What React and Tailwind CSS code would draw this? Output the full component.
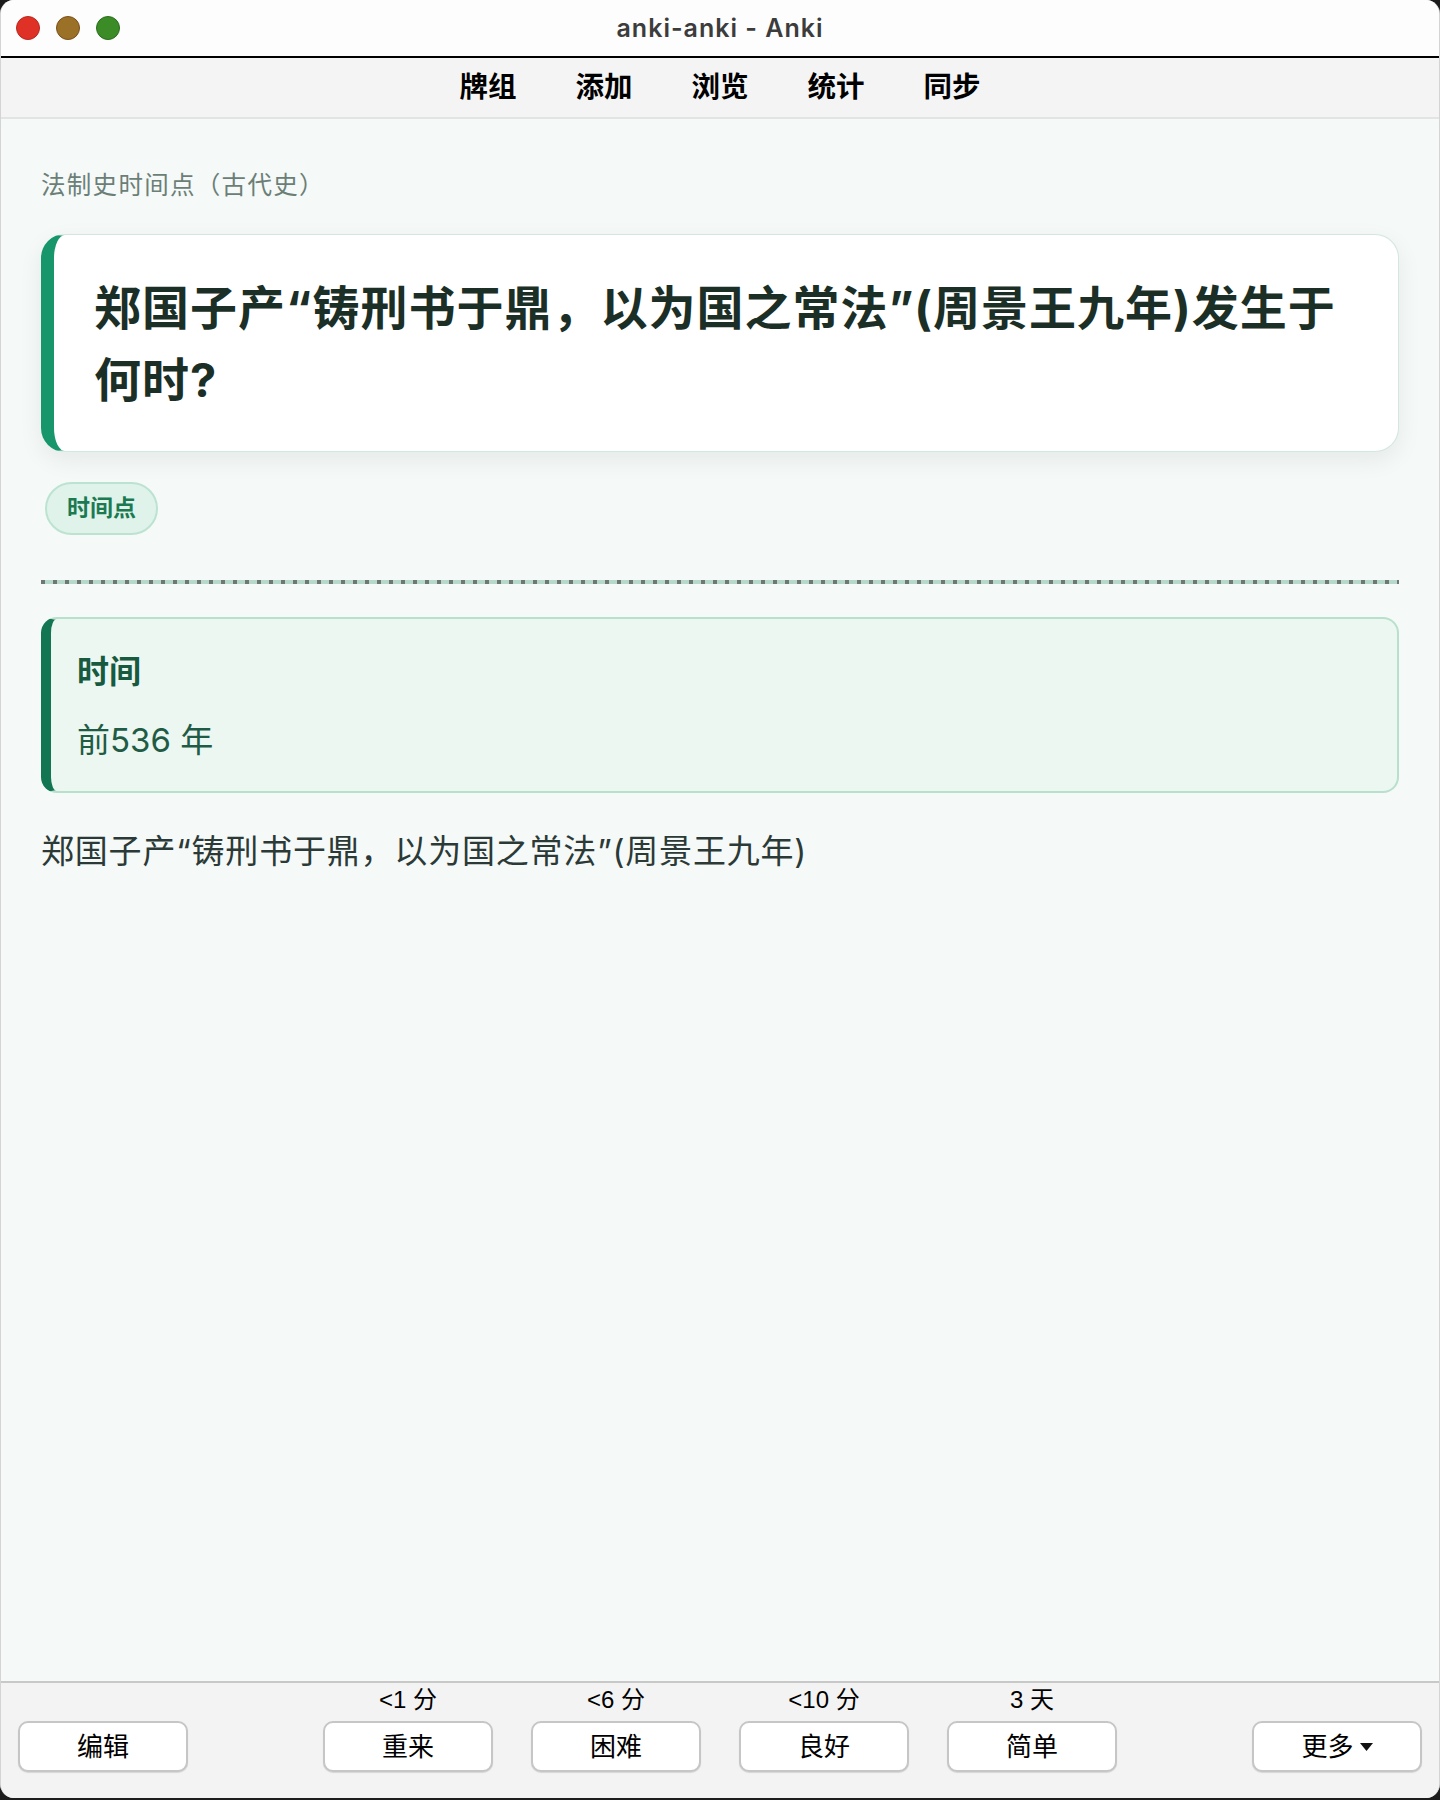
import React from "react";

const cjk = { fontFamily: 'Inter, "Noto Sans CJK SC", sans-serif' };
const cjkFirst = { fontFamily: '"Noto Sans CJK SC", Inter, sans-serif' };
const sys = { fontFamily: '"Liberation Sans", "Noto Sans CJK SC", sans-serif' };

function Btn({ children, className = "" }) {
  return (
    <button
      className={
        "flex h-[51px] w-[170px] items-center justify-center rounded-[10px] border-2 border-[#c6c6c6] bg-white text-[26px] leading-none text-black shadow-[0_1px_1px_rgba(0,0,0,0.12)] " +
        className
      }
      style={sys}
    >
      {children}
    </button>
  );
}

function Answer({ label, text }) {
  return (
    <div className="flex flex-col items-center gap-[6px]">
      <div className="text-[24px] leading-[30px] text-black" style={sys}>
        {label}
      </div>
      <Btn>{text}</Btn>
    </div>
  );
}

export default function App() {
  return (
    <div className="h-[1800px] w-[1440px] bg-[#1c1c1c]">
      <div className="flex h-[1798px] flex-col overflow-hidden rounded-[14px] border-x border-[#d4d4d4] bg-[#f5f9f8]">
        {/* title bar */}
        <div className="grid h-[56px] shrink-0 grid-cols-[1fr_auto_1fr] items-center bg-[#fdfdfd]">
          <div className="flex items-center gap-[16px] pl-[15px]">
            <span className="h-[24px] w-[24px] rounded-full border border-[#b8281e] bg-[#df3126]" />
            <span className="h-[24px] w-[24px] rounded-full border border-[#7a5019] bg-[#9b7027]" />
            <span className="h-[24px] w-[24px] rounded-full border border-[#2b6d1c] bg-[#3b8b27]" />
          </div>
          <div
            className="text-[25px] font-semibold leading-none tracking-[1px] text-[#3c3c3c]"
            style={{ fontFamily: 'Inter, "Liberation Sans", sans-serif' }}
          >
            anki-anki - Anki
          </div>
          <div />
        </div>
        <div className="h-[2px] shrink-0 bg-black" />

        {/* nav */}
        <div
          className="flex h-[61px] shrink-0 items-center justify-center gap-[59px] border-b-2 border-[#e3e3e3] bg-[#f4f4f4] text-[28.5px] font-bold leading-none text-black"
          style={cjk}
        >
          <span>牌组</span>
          <span>添加</span>
          <span>浏览</span>
          <span>统计</span>
          <span>同步</span>
        </div>

        {/* content */}
        <div className="flex min-h-0 flex-1 flex-col px-[40px] pt-[47px]" style={cjk}>
          <div className="text-[24.5px] leading-[36px] tracking-[1.3px] text-[#6b7f77]" style={cjkFirst}>
            法制史时间点（古代史）
          </div>

          <div className="mt-[32px] rounded-[24px] border border-l-[13px] border-[#d3e6df] border-l-[#16966a] bg-white pb-[35px] pl-[40px] pr-[40px] pt-[37px] shadow-[0_8px_24px_rgba(20,40,30,0.07)]">
            <div className="text-[47px] font-bold leading-[72px] tracking-[1px] text-[#1b2f27]">
              郑国子产“铸刑书于鼎，以为国之常法”(周景王九年)发生于何时?
            </div>
          </div>

          <div className="ml-[4px] mt-[30px] self-start rounded-full border-2 border-[#bce3d1] bg-[#dff3ea] px-[20px] py-[8px] text-[23px] font-bold leading-[33px] text-[#1b7a52]">
            时间点
          </div>

          <div className="mt-[45px] h-[4px] bg-[repeating-linear-gradient(90deg,#6f7773_0px,#6f7773_4px,#b6d9cc_4px,#b6d9cc_12px)]" />

          <div className="mt-[33px] rounded-[16px] border-2 border-l-[10px] border-[#b7e0cd] border-l-[#137653] bg-[#ebf7f0] pb-[26px] pl-[26px] pr-[27px] pt-[31px]">
            <div className="text-[32px] font-bold leading-[44px] text-[#175a3f]">时间</div>
            <div className="mt-[21px] text-[33px] leading-[50px] text-[#1f5b45]">前536 年</div>
          </div>

          <div className="mt-[33px] text-[33px] leading-[50px] tracking-[0.8px] text-[#2b3a37]">
            郑国子产“铸刑书于鼎，以为国之常法”(周景王九年)
          </div>
        </div>

        {/* bottom bar */}
        <div className="grid shrink-0 grid-cols-[1fr_auto_1fr] items-end border-t-2 border-[#c8c8c8] bg-[#f3f3f3] px-[17px] pb-[26px] pt-[2px]">
          <div className="justify-self-start">
            <Btn>编辑</Btn>
          </div>
          <div className="flex gap-[38px]">
            <Answer label="<1 分" text="重来" />
            <Answer label="<6 分" text="困难" />
            <Answer label="<10 分" text="良好" />
            <Answer label="3 天" text="简单" />
          </div>
          <div className="justify-self-end">
            <Btn>
              <span>更多</span>
              <svg width="13" height="8" viewBox="0 0 13 8" className="ml-[6px]">
                <polygon points="0,0 13,0 6.5,8" fill="#111" />
              </svg>
            </Btn>
          </div>
        </div>
      </div>
    </div>
  );
}
